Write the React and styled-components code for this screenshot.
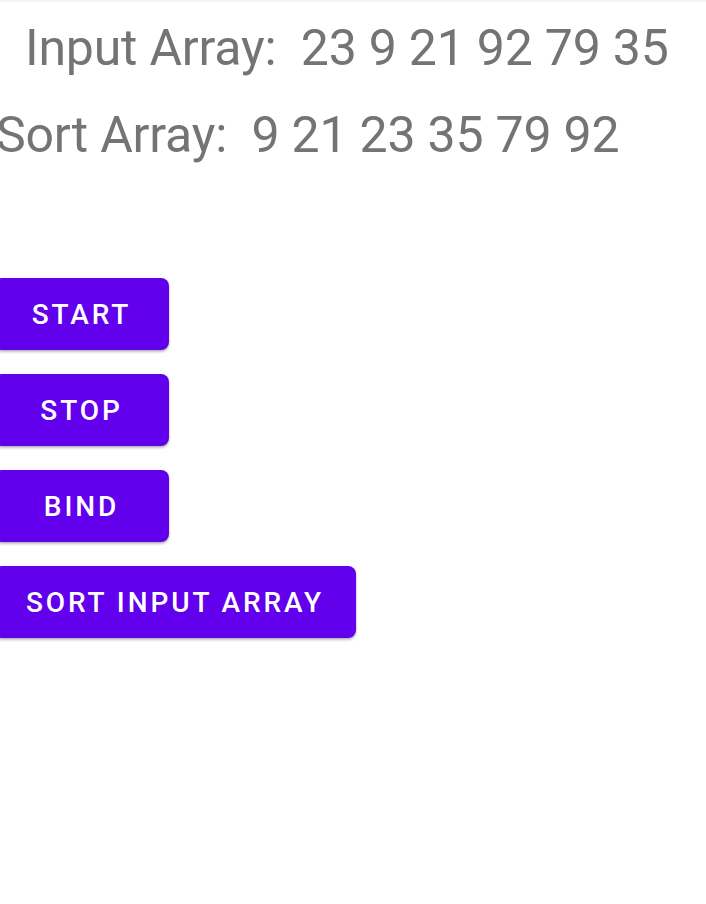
import React from 'react';
import styled, { createGlobalStyle } from 'styled-components';

const GlobalStyle = createGlobalStyle`
  html, body {
    margin: 0;
    padding: 0;
    background: #ffffff;
    overflow: hidden;
  }
  body {
    font-family: Roboto, "Liberation Sans", sans-serif;
  }
`;

const Screen = styled.div`
  width: 706px;
  height: 904px;
  border-top: 2px solid #f4f4f4;
  box-sizing: border-box;
  overflow: hidden;
`;

const Lines = styled.div`
  padding-top: 3px;
`;

const ArrayLine = styled.div`
  font-family: Roboto, "Liberation Sans", sans-serif;
  font-size: 50px;
  font-weight: 400;
  letter-spacing: -0.2px;
  color: #747474;
  line-height: 87px;
  white-space: pre;
  margin-left: ${props => props.$indent}px;
`;

const ButtonColumn = styled.div`
  display: flex;
  flex-direction: column;
  align-items: flex-start;
  gap: 24px;
  margin-top: 99px;
  margin-left: -6px;
`;

const Button = styled.button`
  min-width: 175px;
  height: 72px;
  padding: 0 32px;
  border: none;
  border-radius: 8px;
  background: #6200ee;
  color: #ffffff;
  font-family: Roboto, "Liberation Sans", sans-serif;
  font-size: 28px;
  font-weight: 500;
  letter-spacing: 2.9px;
  text-transform: uppercase;
  box-shadow: 0 2px 3px rgba(0, 0, 0, 0.22), 0 1px 2px rgba(0, 0, 0, 0.12);
  cursor: pointer;
`;

const input = [23, 9, 21, 92, 79, 35];
const sorted = [...input].sort((a, b) => a - b);

export default function App() {
  return (
    <>
      <GlobalStyle />
      <Screen>
        <Lines>
          <ArrayLine $indent={25}>{'Input Array:  ' + input.join(' ')}</ArrayLine>
          <ArrayLine $indent={-4}>{'Sort Array:  ' + sorted.join(' ')}</ArrayLine>
        </Lines>
        <ButtonColumn>
          <Button>Start</Button>
          <Button>Stop</Button>
          <Button>Bind</Button>
          <Button>Sort Input Array</Button>
        </ButtonColumn>
      </Screen>
    </>
  );
}
